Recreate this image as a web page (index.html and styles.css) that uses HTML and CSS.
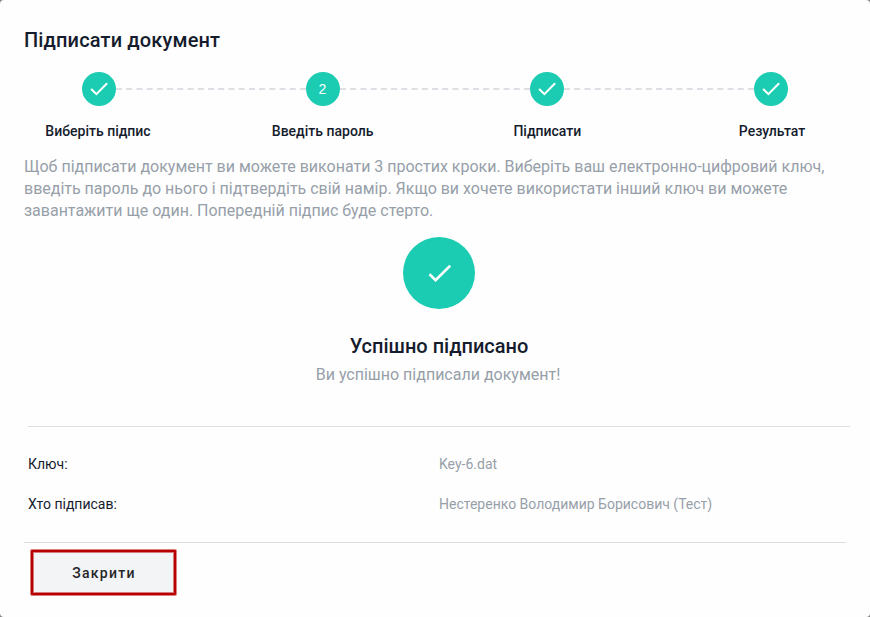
FILE: index.html
```html
<!DOCTYPE html>
<html lang="uk">
<head>
<meta charset="utf-8">
<title>Підписати документ</title>
<link rel="stylesheet" href="styles.css">
</head>
<body>
<main class="dialog">
  <h1 class="title">Підписати документ</h1>
  <div class="track">
    <span class="marker"><svg class="tick" viewBox="0 0 18 14"><path d="M1.7 7.5 L6.4 12.2 L16.6 1.8"/></svg></span>
    <span class="connector"></span>
    <span class="marker">2</span>
    <span class="connector"></span>
    <span class="marker"><svg class="tick" viewBox="0 0 18 14"><path d="M1.7 7.5 L6.4 12.2 L16.6 1.8"/></svg></span>
    <span class="connector"></span>
    <span class="marker"><svg class="tick" viewBox="0 0 18 14"><path d="M1.7 7.5 L6.4 12.2 L16.6 1.8"/></svg></span>
  </div>
  <div class="labels">
    <span class="label">Виберіть підпис</span>
    <span class="label">Введіть пароль</span>
    <span class="label">Підписати</span>
    <span class="label">Результат</span>
  </div>
  <p class="intro">Щоб підписати документ ви можете виконати 3 простих кроки. Виберіть ваш електронно-цифровий ключ, введіть пароль до нього і підтвердіть свій намір. Якщо ви хочете використати інший ключ ви можете завантажити ще один. Попередній підпис буде стерто.</p>
  <section class="result">
    <div class="badge"><svg class="badge-tick" viewBox="0 0 24 18"><path d="M2.5 10.2 L8.6 16.2 L23.2 1.6"/></svg></div>
    <h2 class="result-title">Успішно підписано</h2>
    <p class="result-text">Ви успішно підписали документ!</p>
    <dl class="details">
      <dt>Ключ:</dt><dd>Key-6.dat</dd>
      <dt>Хто підписав:</dt><dd>Нестеренко Володимир Борисович (Тест)</dd>
    </dl>
  </section>
  <footer class="footer">
    <button class="close" type="button">Закрити</button>
  </footer>
</main>
</body>
</html>
```
FILE: styles.css
```css
* {
  box-sizing: border-box;
}

body {
  margin: 0;
  background: #808080;
  font-family: Roboto, "Liberation Sans", sans-serif;
  color: #151c2d;
}

h1, h2, p, dl, dd {
  margin: 0;
}

.dialog {
  height: 617px;
  padding: 24px;
  overflow: hidden;
  border-radius: 4px;
  background: #fefefe;
}

.title {
  font-size: 20px;
  font-weight: 500;
  line-height: 32px;
  letter-spacing: 0.15px;
}

.track {
  display: flex;
  align-items: center;
  margin-top: 16px;
  padding: 0 58px;
}

.marker {
  display: flex;
  align-items: center;
  justify-content: center;
  width: 34px;
  height: 34px;
  padding-right: 1px;
  border-radius: 50%;
  background: #1bccb3;
  color: #fff;
  font-family: "Liberation Sans", sans-serif;
  font-size: 14px;
}

.connector {
  flex: 1;
  border-top: 2px dashed #dcdfe3;
}

.tick {
  width: 18px;
  height: 14px;
}

.tick path,
.badge-tick path {
  fill: none;
  stroke: #fff;
  stroke-width: 2;
}

.tick path {
  stroke-linecap: round;
}

.labels {
  display: flex;
  justify-content: space-between;
  margin: 15px -1px 0;
}

.label {
  width: 150px;
  text-align: center;
  font-size: 14px;
  font-weight: 500;
  line-height: 20px;
}

.intro {
  margin-top: 15px;
  color: #979fa9;
  font-size: 16px;
  line-height: 22px;
  letter-spacing: -0.008px;
}

.result {
  width: 822px;
  margin: 15px 0 0 4px;
  text-align: center;
}

.badge {
  display: flex;
  align-items: center;
  justify-content: center;
  width: 72px;
  height: 72px;
  margin: 0 auto;
  border-radius: 50%;
  background: #1bccb3;
}

.badge-tick {
  width: 24px;
  height: 18px;
}

.badge-tick path {
  stroke-width: 2.6;
}

.result-title {
  margin-top: 25px;
  font-size: 20px;
  font-weight: 500;
  line-height: 24px;
}

.result-text {
  margin-top: 6px;
  padding-right: 2px;
  color: #979fa9;
  font-size: 16px;
  line-height: 22px;
}

.details {
  display: grid;
  grid-template-columns: 1fr 1fr;
  row-gap: 20px;
  margin-top: 40px;
  padding: 27px 0 28px;
  border-top: 1px solid #dedede;
  text-align: left;
  font-size: 14px;
  line-height: 20px;
}

.details dd {
  color: #979fa9;
}

.footer {
  padding: 7px 0 0 7px;
  border-top: 1px solid #dedede;
}

.close {
  display: block;
  width: 145px;
  height: 45px;
  padding: 0 0 0 1px;
  border: 2px solid #b90000;
  border-radius: 1px;
  background: #f3f4f6;
  box-shadow: 0 0 0 1px rgba(185, 0, 0, 0.5), inset 0 0 0 1px rgba(185, 0, 0, 0.5);
  color: #262626;
  font-family: inherit;
  font-size: 14px;
  font-weight: 500;
  letter-spacing: 1.25px;
}
```
